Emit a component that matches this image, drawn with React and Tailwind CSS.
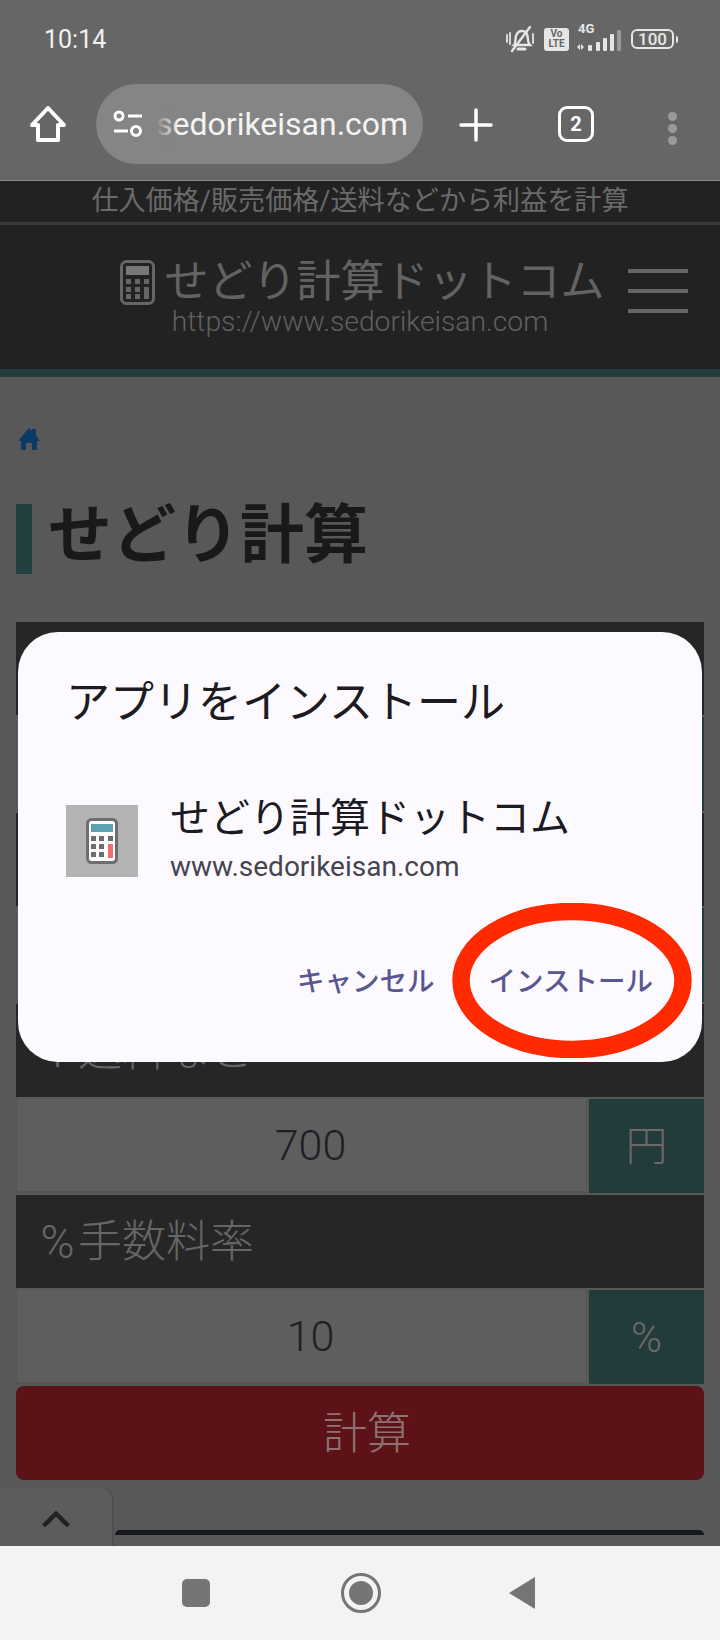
import { ChevronUp } from 'lucide-react'

const cjk = "font-['Roboto','Noto_Sans_CJK_JP',sans-serif]"

// the first two rows sit behind the dialog, so only their boxes show
const rows = [
  { id: 'cost', label: '', value: '', unit: '' },
  { id: 'price', label: '', value: '', unit: '' },
  { id: 'shipping', prefix: '¥', label: '送料など', value: '700', unit: '円' },
  { id: 'fee', prefix: '%', label: '手数料率', value: '10', unit: '%' },
]

function StatusIcons() {
  return (
    <div className="flex items-center text-[#e6e6e6]">
      {/* muted bell */}
      <svg width="32" height="30" viewBox="0 0 32 30" fill="none" stroke="currentColor" strokeWidth="2.4" strokeLinecap="round">
        <path d="M9 21c2-2 1-5 2-9 1-3 3-5 6-5s5 2 5.500 5c.5 4 .5 7 2.500 9z" />
        <path d="M13 25h7" strokeWidth="3" />
        <path d="M7 27 25 3" />
        <path d="M2 11v7M5 9v11M28 10v9" strokeWidth="1.800" />
      </svg>
      <div className="ml-[7px] flex h-[23px] w-[25px] flex-col items-center justify-center rounded-[3px] bg-[#e6e6e6] font-['Roboto',sans-serif] text-[10px] leading-[10px] font-bold text-[#666666]">
        <span>Vo</span>
        <span>LTE</span>
      </div>
      <div className="relative ml-[7px] h-[28px] w-[46px]">
        <span className="absolute top-[-4px] left-[2px] font-['Roboto',sans-serif] text-[13px] leading-[16px] font-bold">4G</span>
        <svg className="absolute bottom-0 left-0" width="46" height="24" viewBox="0 0 46 24" fill="currentColor">
          <path d="M4 15v6l-3-3zM5 15l3 3-3 3z" />
          <rect x="12" y="16" width="4" height="6" rx="1" />
          <rect x="20" y="13" width="4" height="9" rx="1" />
          <rect x="27" y="9" width="4" height="13" rx="1" />
          <rect x="34" y="5" width="4" height="17" rx="1" />
          <rect x="41" y="1" width="4" height="21" rx="1" fill="#9a9a9a" />
        </svg>
      </div>
      <div className="ml-[9px] flex h-[20px] w-[43px] items-center justify-center rounded-[6px] border-2 border-[#e6e6e6] font-['Roboto',sans-serif] text-[17px] leading-none font-medium">
        100
      </div>
      <div className="ml-[2px] h-[7px] w-[2px] rounded-r-sm bg-[#e6e6e6]" />
    </div>
  )
}

function Toolbar() {
  return (
    <div className="flex h-[116px] items-start pt-[19px]">
      <svg className="mt-[21px] ml-[29px]" width="38" height="38" viewBox="0 0 38 38" fill="none" stroke="white" strokeWidth="4" strokeLinejoin="round">
        <path d="M19 3 3 20h6v15h20V20h6z" />
      </svg>
      <div className="ml-[29px] flex h-[80px] w-[327px] items-center overflow-hidden rounded-full bg-[#858585]">
        <svg className="ml-[16px] shrink-0" width="32" height="30" viewBox="0 0 32 30" fill="none" stroke="white" strokeWidth="3">
          <circle cx="7" cy="7" r="4" />
          <path d="M16 7h14M2 22h14" />
          <circle cx="24" cy="22" r="4.500" />
        </svg>
        <div className="relative ml-[12px] w-[260px] overflow-hidden">
          <span className="block font-['Roboto',sans-serif] text-[32px] leading-[42px] whitespace-nowrap text-[#f4f4f4]">sedorikeisan.com</span>
          <div className="absolute inset-y-0 left-0 w-[22px] bg-gradient-to-r from-[#858585] to-[#85858500]" />
        </div>
      </div>
      <svg className="mt-[23px] ml-[35px]" width="36" height="36" viewBox="0 0 36 36" stroke="white" strokeWidth="3.500" strokeLinecap="round">
        <path d="M18 3v30M3 18h30" />
      </svg>
      <div className="mt-[22px] ml-[64px] flex h-[36px] w-[36px] items-center justify-center rounded-[9px] border-[3.500px] border-white font-['Roboto',sans-serif] text-[20px] font-bold text-white">
        2
      </div>
      <div className="mt-[28px] ml-[74px] flex flex-col gap-[3px]">
        <div className="h-[9px] w-[9px] rounded-full bg-[#9a9a9a]" />
        <div className="h-[9px] w-[9px] rounded-full bg-[#9a9a9a]" />
        <div className="h-[9px] w-[9px] rounded-full bg-[#9a9a9a]" />
      </div>
    </div>
  )
}

function SiteHeader() {
  return (
    <div className="bg-[#222222]">
      <div className="flex h-[44px] items-center justify-center border-b-[3px] border-[#383838] text-[27.100px] leading-none text-[#6a6a6a]">
        仕入価格/販売価格/送料などから利益を計算
      </div>
      <div className="relative flex h-[144px] flex-col items-center pt-[32px]">
        <div className="ml-[4px] flex items-center">
          <svg className="mr-[10px]" width="35" height="45" viewBox="0 0 35 45" fill="#666666">
            <rect x="1.500" y="1.500" width="32" height="42" rx="5" fill="none" stroke="#666666" strokeWidth="3" />
            <rect x="6" y="6" width="23" height="9" fill="#777777" />
            <path d="M6 19h5v5H6zM15 19h5v5h-5zM24 19h5v5h-5zM6 27h5v5H6zM15 27h5v5h-5zM24 27h5v12h-5zM6 34h5v5H6zM15 34h5v5h-5z" />
          </svg>
          <span className="text-[44px] leading-[50px] text-[#636363]">せどり計算ドットコム</span>
        </div>
        <span className="mt-[-1px] font-['Roboto',sans-serif] text-[28.300px] leading-[32px] font-light text-[#606060]">https://www.sedorikeisan.com</span>
        <div className="absolute top-[44px] right-[32px] flex flex-col gap-[16px]">
          <div className="h-[4px] w-[60px] bg-[#666666]" />
          <div className="h-[4px] w-[60px] bg-[#666666]" />
          <div className="h-[4px] w-[60px] bg-[#666666]" />
        </div>
      </div>
      <div className="h-[8px] bg-[#243b3c]" />
    </div>
  )
}

function FormRow({ prefix, label, value, unit }) {
  return (
    <>
      <div className="flex h-[93px] items-center bg-[#262626] pl-[21px] text-[44px] leading-none font-light text-[#666666]">
        {prefix && <span className="w-[41px] text-center font-['Roboto',sans-serif] text-[46px]">{prefix}</span>}
        <span>{label}</span>
      </div>
      <div className="my-[2px] flex h-[94px]">
        <div className="flex w-[571px] items-center justify-center border-x border-b-2 border-[#555555] bg-[#5e5e5e] pl-[18px] font-['Roboto',sans-serif] text-[43px] font-light text-[#1d1f24]">
          {value}
        </div>
        <div className="ml-[2px] flex flex-1 items-center justify-center bg-[#243b3c] text-[42px] font-light text-[#6a6a6a]">
          {unit}
        </div>
      </div>
    </>
  )
}

function InstallDialog() {
  return (
    <div className="absolute top-[632px] left-[18px] h-[430px] w-[684px] rounded-[40px] bg-[#fcfaff]">
      <h2 className="pt-[44px] pl-[48px] text-[44px] leading-[54px] font-normal text-[#1c1b1f]">アプリをインストール</h2>
      <div className="mt-[66px] flex pl-[48px]">
        <div className="mt-[9px] flex h-[72px] w-[72px] items-center justify-center bg-[#b3b3b3]">
          <svg width="32" height="46" viewBox="0 0 32 46">
            <rect x="1.500" y="1.500" width="29" height="43" rx="4" fill="white" stroke="#6d6d6d" strokeWidth="3" />
            <rect x="5" y="6" width="22" height="8" fill="#5ba3b0" />
            <path fill="#6d6d6d" d="M5 18h5v5H5zM13 18h5v5h-5zM22 18h5v5h-5zM5 26h5v5H5zM13 26h5v5h-5zM5 34h5v5H5zM13 34h5v5h-5z" />
            <rect x="22" y="26" width="5" height="14" fill="#f26d6d" />
          </svg>
        </div>
        <div className="ml-[32px] flex flex-col">
          <span className="text-[40px] leading-[46px] text-[#1c1b1f]">せどり計算ドットコム</span>
          <span className="mt-[8px] font-['Roboto',sans-serif] text-[28px] leading-[34px] text-[#46444f]">www.sedorikeisan.com</span>
        </div>
      </div>
      <div className="mt-[80px] flex justify-end gap-[54px] pr-[49px] text-[27.500px] leading-[36px] font-medium text-[#5a5790]">
        <span>キャンセル</span>
        <span>インストール</span>
      </div>
      {/* red marker ring round the install button */}
      <svg className="absolute top-[271px] left-[434px]" width="240" height="155" viewBox="0 0 240 155" fill="none">
        <ellipse cx="120" cy="77.500" rx="111" ry="69" stroke="#ff2a00" strokeWidth="17.500" />
      </svg>
    </div>
  )
}

export default function App() {
  return (
    <div className={`relative flex h-[1640px] w-[720px] flex-col overflow-hidden bg-[#585858] ${cjk}`}>
      <div className="h-[181px] shrink-0 border-b border-[#8a8a8a] bg-[#666666]">
        <div className="flex h-[65px] items-end justify-between pr-[42px] pl-[44px]">
          <span className="mb-[10px] font-['Roboto',sans-serif] text-[25px] leading-[30px] text-[#f0f0f0]">10:14</span>
          <div className="mb-[11px]">
            <StatusIcons />
          </div>
        </div>
        <Toolbar />
      </div>

      <SiteHeader />

      <main className="flex-1 overflow-hidden px-[16px]">
        <svg className="mt-[51px] ml-[2px]" width="22" height="22" viewBox="0 0 22 22" fill="#0c3a66">
          <path d="M11 0 14 3V1h4v6l4 6h-3v9h-5v-7H8v7H3v-9H0z" />
        </svg>
        <div className="mt-[54px] flex h-[70px] items-center border-l-[16px] border-[#243f3f] pb-[6px] pl-[16px] text-[64px] leading-none font-bold text-[#191919]">
          せどり計算
        </div>
        <div className="mt-[48px]">
          {rows.map((row) => (
            <FormRow key={row.id} {...row} />
          ))}
          <div className="mt-[1px] flex h-[94px] items-center justify-center rounded-[8px] bg-[#5c1216] pt-[2px] pl-[14px] text-[44px] font-light text-[#8c7272]">
            計算
          </div>
        </div>
        <div className="mt-[50px] ml-[99px] h-[5px] rounded-t-[10px] bg-[#15181d]" />
      </main>

      <InstallDialog />

      <div className="absolute top-[1487px] left-0 flex h-[59px] w-[114px] justify-center rounded-tr-[14px] border-r-2 border-[#4f4f4f] bg-[#5c5c5c]">
        <ChevronUp className="mt-[10px]" size={44} strokeWidth={2.500} color="#222222" />
      </div>

      <div className="flex h-[94px] shrink-0 items-center justify-center gap-[131px] bg-[#f1f3f5] pr-[3px]">
        <div className="h-[28px] w-[28px] rounded-[5px] bg-[#757575]" />
        <div className="flex h-[40px] w-[40px] items-center justify-center rounded-full border-[3px] border-[#757575]">
          <div className="h-[24px] w-[24px] rounded-full bg-[#757575]" />
        </div>
        <svg className="ml-[-4px]" width="28" height="34" viewBox="0 0 28 34" fill="#757575">
          <path d="M27 1v32L1 17z" />
        </svg>
      </div>
    </div>
  )
}
